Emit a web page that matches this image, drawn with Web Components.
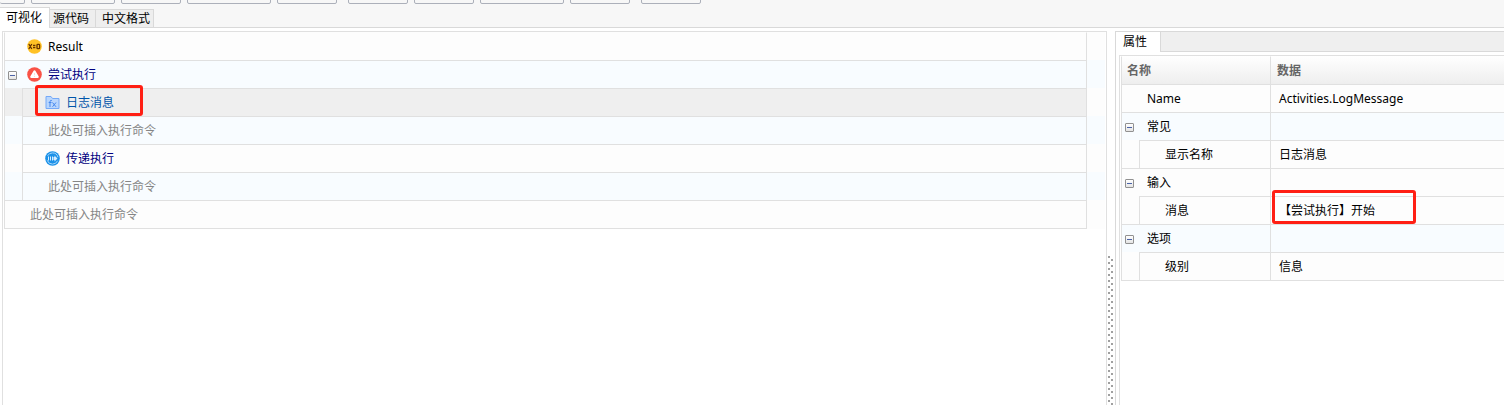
<!DOCTYPE html>
<html lang="zh-CN">
<head>
<meta charset="utf-8">
<title>流程编辑器</title>
<style>
html, body { margin: 0; height: 100%; }
body { background: #fff; color: #000; font: 12px/16px "Noto Sans", "Noto Sans CJK SC", sans-serif; overflow: hidden; }
</style>
</head>
<body>
<flow-editor></flow-editor>
<script>
const define = (name, html, setup) => {
  const template = document.createElement('template');
  template.innerHTML = html;
  customElements.define(name, class extends HTMLElement {
    constructor() {
      super();
      this.attachShadow({ mode: 'open' }).append(template.content.cloneNode(true));
    }
    connectedCallback() { if (setup) setup(this, this.shadowRoot); }
  });
};

const icons = {
  variable: `<svg viewBox="0 0 15 15"><circle cx="7.500" cy="7.500" r="7.300" fill="#ffc125"/><g fill="none" stroke="#653200" stroke-width="1.300"><path d="M1.800 5l3 5M4.800 5l-3 5M6 6.500h2.400M6 8.700h2.400"/><rect x="10" y="5.300" width="2.600" height="4.400" rx=".8"/></g></svg>`,
  attempt: `<svg viewBox="0 0 15 15"><circle cx="7.500" cy="7.500" r="7.300" fill="#f95246"/><path d="M7.500 4.600L10.600 9.800H4.400z" fill="#fff" stroke="#fff" stroke-width="2.400" stroke-linejoin="round"/><path d="M7.500 6v2.200M7.500 9v1" stroke="#ffd9d5" stroke-width="1"/></svg>`,
  log: `<svg viewBox="0 0 15 15"><path d="M1 1.500h5l1.500 2H14v10H1z" fill="#b9d6fd" stroke="#75a9f8"/><path d="M6.800 5.500c-1.300-.3-1.800.2-1.800 1.300V12M3.700 7.500h2.800M7.500 7.500l3.500 4.300M11 7.500l-3.500 4.300" fill="none" stroke="#4688ee"/></svg>`,
  pass: `<svg viewBox="0 0 15 15"><circle cx="7.500" cy="7.500" r="7.300" fill="#1b91e8"/><circle cx="7.500" cy="7.500" r="5.600" fill="none" stroke="#a5d6fb" stroke-width="1" stroke-dasharray="13 4.600" stroke-dashoffset="-2.300"/><path d="M3.500 5.500v4M5.500 5.500v4M7.500 5.500v4" stroke="#d5ecff" stroke-width="1"/><path d="M8.500 6h1V4.600l3 2.900-3 2.900V9h-1z" fill="#d5ecff"/></svg>`
};

define('tool-strip', `
<style>
:host { display: flex; height: 4px; overflow: hidden; align-items: flex-end; }
button { box-sizing: border-box; flex: none; width: 60px; height: 24px; margin: 0 6px 0 0; padding: 0; border: 1px solid #acb0ba; border-radius: 2px; background: #f7f7f7; }
.first { width: 25px; border-left: 0; }
.wide { width: 84px; }
.end { margin-right: 11px; }
</style>
<button class="first"></button><button class="wide"></button><button></button><button class="wide"></button><button class="end"></button><button></button><button></button><button class="wide"></button><button class="end"></button><button></button>`);

define('view-tab', `
<style>
:host { display: block; }
button { box-sizing: border-box; height: 18px; margin: 0; padding: 0 6px 0 3px; border: 1px solid #d9d9d9; border-width: 1px 1px 0 0; background: #eee; color: #000; font: inherit; }
:host([wide]) button { padding: 0 3px 0 6px; }
:host([active]) button { height: 21px; margin-bottom: -1px; padding: 0 7px 0 6px; background: #fff; }
:host([panel]) button { padding: 0 13px 0 7px; }
</style>
<button type="button" role="tab"><slot></slot></button>`, (host, root) => {
  root.querySelector('button').setAttribute('aria-selected', host.hasAttribute('active'));
});

define('fold-box', `
<style>
:host { display: block; width: 9px; height: 9px; flex: none; }
button { display: block; box-sizing: border-box; width: 9px; height: 9px; margin: 0; padding: 0; border: 1px solid #919191; border-radius: 1px; background: linear-gradient(#4b63a7, #4b63a7) center / 5px 1px no-repeat, linear-gradient(#fff, #e4e4e4); }
</style>
<button type="button" aria-expanded="true"></button>`);

define('mark-box', `
<style>
:host { position: absolute; box-sizing: border-box; border: 3px solid #ff1f14; border-radius: 3px; pointer-events: none; z-index: 2; }
</style>`);

define('command-row', `
<style>
:host { display: flex; box-sizing: border-box; height: 28px; position: relative; background: #fdfdfd; }
:host([alt]) { background: #f8fcff; }
.indent { display: none; box-sizing: border-box; width: 18px; border-left: 1px solid #e0e0e0; }
:host([child]) .indent { display: block; }
.body { box-sizing: border-box; flex: 1; display: flex; align-items: center; position: relative; border: 1px solid #e0e0e0; border-width: 1px 1px 0 1px; padding-left: 22px; }
:host([first]) .body { border-top-color: transparent; }
:host([last]) { height: 29px; }
:host([last]) .body { border-bottom-width: 1px; }
:host([hint]) .body { padding-left: 25px; color: #858585; }
.gutter { width: 18px; }
fold-box { position: absolute; left: 3px; top: 10px; }
.icon { width: 15px; height: 15px; margin-right: 6px; }
:host([hint]) .icon { display: none; }
svg { display: block; width: 15px; height: 15px; }
:host([action]) .body { color: #000080; }
:host([selected]) .body { background: #efefef; color: #0055aa; }
:host([selected]) .indent { background: #efefef; }
mark-box { left: 12px; top: -4px; width: 108px; height: 31px; }
</style>
<div class="indent"></div><div class="body"><div class="icon"></div><slot></slot></div><div class="gutter"></div>`, (host, root) => {
  host.setAttribute('role', 'treeitem');
  const body = root.querySelector('.body');
  root.querySelector('.icon').innerHTML = icons[host.getAttribute('icon')] || '';
  if (host.hasAttribute('fold')) body.append(document.createElement('fold-box'));
  if (host.hasAttribute('marked')) body.append(document.createElement('mark-box'));
});

define('command-tree', `
<style>
:host { display: block; border: 1px solid #e0e0e0; border-bottom: 0; padding: 0 1px; background: #fff; min-width: 0; }
</style>
<div role="tree">
<command-row first icon="variable">Result</command-row>
<command-row alt action fold icon="attempt">尝试执行</command-row>
<command-row child selected marked icon="log">日志消息</command-row>
<command-row child alt hint>此处可插入执行命令</command-row>
<command-row child action icon="pass">传递执行</command-row>
<command-row child alt hint>此处可插入执行命令</command-row>
<command-row last hint>此处可插入执行命令</command-row>
</div>`);

define('pane-splitter', `
<style>
:host { display: flex; flex-direction: column; background: #fff; cursor: col-resize; }
.grip { flex: 1; margin: 225px 2px 0 1px; }
svg { display: block; width: 5px; height: 100%; }
</style>
<div class="grip"><svg><defs><pattern id="dots" width="5" height="6" patternUnits="userSpaceOnUse"><path d="M0 0h2v2H0zM3 3h2v2H3z" fill="#a0a0a0"/></pattern></defs><rect width="5" height="100%" fill="url(#dots)"/></svg></div>`);

define('property-grid', `
<style>
:host { display: block; flex: 1; margin: 3px 0 0 3px; border: 1px solid #e0e0e0; border-width: 1px 0 0 1px; padding-left: 1px; }
table { width: 100%; border-collapse: collapse; border-spacing: 0; table-layout: fixed; }
th, td { padding: 0; font-weight: normal; text-align: left; }
.name { width: 149px; }
.cell { box-sizing: border-box; height: 28px; display: flex; align-items: center; position: relative; border: 0 solid #e0e0e0; border-width: 1px 0 0 1px; padding-left: 25px; }
thead { background: linear-gradient(#fff, #eee); color: #666; }
thead th { font-weight: bold; }
thead .cell { border-top-color: transparent; padding-left: 6px; }
thead .name .cell { padding-left: 5px; }
tbody tr { background: #fdfdfd; }
tbody .alt { background: #f8fcff; }
td .cell { padding-left: 8px; }
.child th .cell { margin-left: 18px; }
.child th { background: linear-gradient(#e0e0e0, #e0e0e0) 0 0 / 1px 100% no-repeat; }
fold-box { position: absolute; left: 3px; top: 10px; }
tbody tr:last-child { border-bottom: 1px solid #e0e0e0; }
mark-box { left: 1px; top: -7px; width: 144px; height: 34px; }
</style>
<table>
<thead><tr><th class="name" scope="col"><div class="cell">名称</div></th><th scope="col"><div class="cell">数据</div></th></tr></thead>
<tbody>
<tr><th scope="row"><div class="cell">Name</div></th><td><div class="cell">Activities.LogMessage</div></td></tr>
<tr class="alt"><th scope="row"><div class="cell"><fold-box></fold-box>常见</div></th><td><div class="cell"></div></td></tr>
<tr class="child"><th scope="row"><div class="cell">显示名称</div></th><td><div class="cell">日志消息</div></td></tr>
<tr><th scope="row"><div class="cell"><fold-box></fold-box>输入</div></th><td><div class="cell"></div></td></tr>
<tr class="child"><th scope="row"><div class="cell">消息</div></th><td><div class="cell">【尝试执行】开始<mark-box></mark-box></div></td></tr>
<tr class="alt"><th scope="row"><div class="cell"><fold-box></fold-box>选项</div></th><td><div class="cell"></div></td></tr>
<tr class="child"><th scope="row"><div class="cell">级别</div></th><td><div class="cell">信息</div></td></tr>
</tbody>
</table>`);

define('property-panel', `
<style>
:host { display: flex; flex-direction: column; border: 1px solid #d9d9d9; border-width: 1px 0 0 1px; min-width: 0; background: #fff; }
.tabs { display: flex; box-sizing: border-box; height: 20px; border-bottom: 1px solid #d9d9d9; background: #efefef; }
view-tab { margin-top: -1px; }
</style>
<div class="tabs" role="tablist"><view-tab active panel>属性</view-tab></div>
<property-grid></property-grid>`);

define('flow-editor', `
<style>
:host { display: flex; flex-direction: column; height: 100vh; }
header { background: #f7f7f7; border-bottom: 1px solid #d9d9d9; }
.tabs { display: flex; align-items: flex-end; height: 20px; padding-top: 3px; }
main { flex: 1; display: grid; grid-template-columns: minmax(0, 1fr) 8px 389px; padding: 3px 0 0 2px; }
</style>
<header>
<tool-strip></tool-strip>
<div class="tabs" role="tablist"><view-tab active>可视化</view-tab><view-tab>源代码</view-tab><view-tab wide>中文格式</view-tab></div>
</header>
<main><command-tree></command-tree><pane-splitter></pane-splitter><property-panel></property-panel></main>`);
</script>
</body>
</html>
